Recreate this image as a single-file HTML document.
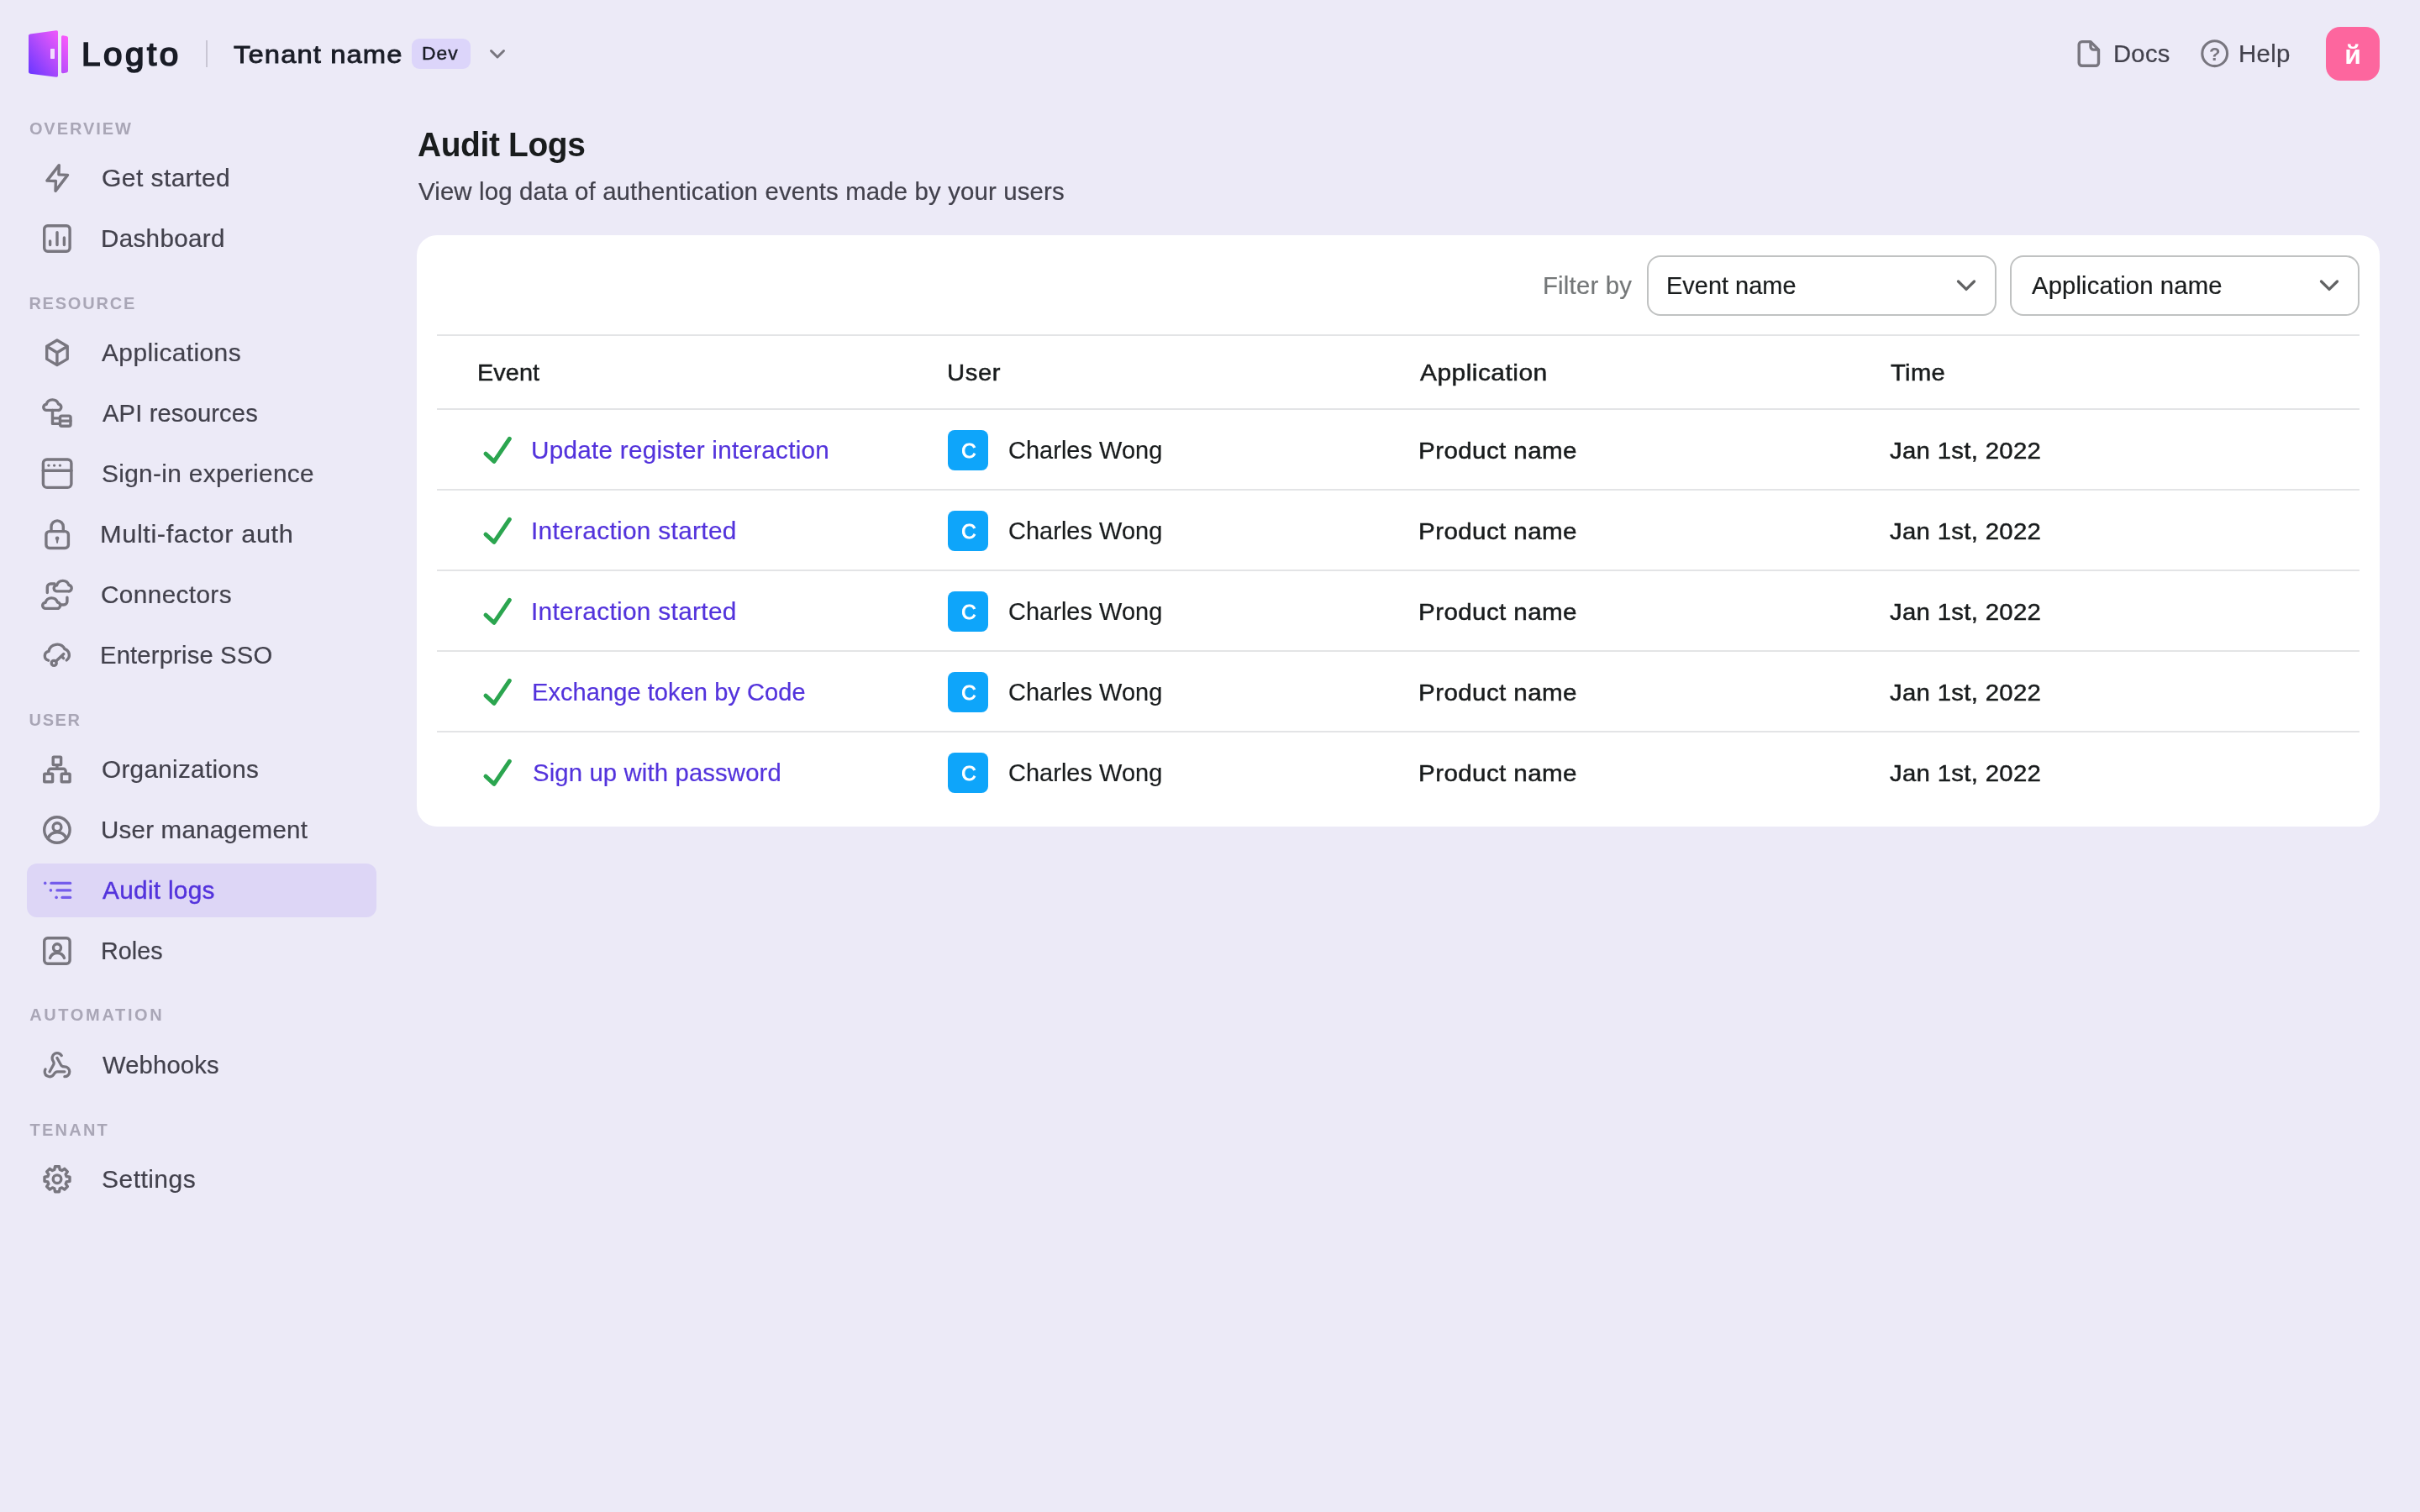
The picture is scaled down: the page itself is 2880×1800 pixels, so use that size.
<!DOCTYPE html>
<html lang="en"><head><meta charset="utf-8"><title>Audit Logs</title>
<style>
html,body{margin:0;padding:0}
html{background:#eceaf7;overflow:hidden}
body{width:2880px;height:1800px;background:#eceaf7;overflow:hidden;position:relative;}
#page{width:2880px;height:1800px;background:#eceaf7;position:absolute;left:0;top:0;overflow:hidden;transform-origin:0 0;font-family:"Liberation Sans",sans-serif;}
.t{position:absolute;white-space:nowrap;transform-origin:0 0;}
#txt{position:absolute;left:0;top:0;width:2880px;height:1800px;will-change:transform}
.abs{position:absolute}
#card{left:496px;top:280px;width:2336px;height:704px;background:#fff;border-radius:24px}
.hl{position:absolute;left:520px;width:2288px;height:2px;background:#e3e4e6}
.sel{position:absolute;top:304px;width:412px;height:68px;border:2px solid #c0c2c2;border-radius:16px;background:#fff}
.ua{position:absolute;left:1128px;width:48px;height:48px;border-radius:8px;background:#0ea5fa}
svg{position:absolute;left:0;top:0;will-change:transform}
</style></head><body><div id="page">
<div class="abs" style="left:32px;top:1028px;width:416px;height:64px;border-radius:12px;background:#ddd6f6"></div>
<div class="abs" style="left:245px;top:48px;width:2px;height:32px;background:#c9c6d4"></div>
<div class="abs" style="left:490px;top:46px;width:70px;height:36px;border-radius:9px;background:#dcd5fa"></div>
<div class="abs" style="left:2768px;top:32px;width:64px;height:64px;border-radius:17px;background:#fd669e"></div>
<div class="abs" id="card"></div>
<div class="sel" style="left:1960px"></div>
<div class="sel" style="left:2392px"></div>
<div class="hl" style="top:398px"></div><div class="hl" style="top:486px"></div><div class="hl" style="top:582px"></div><div class="hl" style="top:678px"></div><div class="hl" style="top:774px"></div><div class="hl" style="top:870px"></div>
<div class="ua" style="top:512px"></div><div class="ua" style="top:608px"></div><div class="ua" style="top:704px"></div><div class="ua" style="top:800px"></div><div class="ua" style="top:896px"></div>
<svg width="2880" height="1800" viewBox="0 0 2880 1800">

<defs>
<linearGradient id="lg" gradientUnits="userSpaceOnUse" x1="34" y1="84" x2="84" y2="46">
<stop offset="0" stop-color="#6f38ff"/><stop offset="0.5" stop-color="#b84dfb"/><stop offset="1" stop-color="#ff5cfb"/>
</linearGradient>
</defs>
<path d="M36 40.4 L67 36.2 Q69 36 69 38 V90 Q69 92 67 91.8 L36 87.8 Q34 87.5 34 85.5 V42.5 Q34 40.7 36 40.4 Z" fill="url(#lg)"/>
<path d="M73 44 Q73 42 75 42.3 L79.2 43 Q81 43.3 81 45 V84.5 Q81 86.2 79.2 86.5 L75 87.3 Q73 87.6 73 85.6 Z" fill="url(#lg)"/>
<rect x="60" y="58" width="5" height="12" rx="0.8" fill="#f3dcff"/>

<path d="M70.3 196.6 L55.9 215.1 L66.4 215.5 L66 227.4 L80.5 208.4 L69.9 207.9 Z" fill="none" stroke="#78767f" stroke-width="3.4" stroke-linecap="round" stroke-linejoin="round" />
<rect x="52.7" y="268.8" width="30.40" height="30.40" rx="4" fill="none" stroke="#78767f" stroke-width="3.4"/>
<path d="M59.6 287 V291.5 M68 276.6 V291.5 M76.4 283 V291.5" fill="none" stroke="#78767f" stroke-width="3.4" stroke-linecap="round" stroke-linejoin="round" />
<path d="M67.9 405 L80.2 412.2 V427.4 L67.9 434.6 L55.7 427.4 V412.2 Z M55.7 412.2 L67.9 419.8 L80.2 412.2 M67.9 419.8 V434.6" fill="none" stroke="#78767f" stroke-width="3.4" stroke-linecap="round" stroke-linejoin="round" />
<path d="M55.50 488.40 a3.6 3.6 0 0 1 -0.3 -7.2 a7.5 7.5 0 0 1 14.3 -0.2 a3.7 3.7 0 0 1 -0.8 7.4 Z" fill="none" stroke="#78767f" stroke-width="3.4" stroke-linecap="round" stroke-linejoin="round" />
<path d="M62.5 488.4 V504.4 H70.3 M62.5 497.9 H70.3" fill="none" stroke="#78767f" stroke-width="3.4" stroke-linecap="round" stroke-linejoin="round" />
<rect x="71.5" y="495.1" width="12.50" height="12.10" rx="2" fill="none" stroke="#78767f" stroke-width="3.4"/>
<path d="M71.5 501.1 H84" fill="none" stroke="#78767f" stroke-width="3.4" stroke-linecap="round" stroke-linejoin="round" />
<rect x="51.4" y="547" width="33.50" height="33.40" rx="4.5" fill="none" stroke="#78767f" stroke-width="3.4"/>
<path d="M51.4 560.2 H84.9" fill="none" stroke="#78767f" stroke-width="3.4" stroke-linecap="round" stroke-linejoin="round" />
<circle cx="57.9" cy="554.1" r="1.7" fill="#78767f"/>
<circle cx="64.6" cy="554.1" r="1.7" fill="#78767f"/>
<circle cx="71.4" cy="554.1" r="1.7" fill="#78767f"/>
<rect x="54.9" y="632.6" width="26.50" height="19.90" rx="4" fill="none" stroke="#78767f" stroke-width="3.4"/>
<path d="M61 632.6 V627 a7.15 7.15 0 0 1 14.3 0 V632.6" fill="none" stroke="#78767f" stroke-width="3.4" stroke-linecap="round" stroke-linejoin="round" />
<path d="M68.1 638.4 a2.3 2.3 0 0 1 2.3 2.3 c0 1 -0.6 1.5 -0.9 2.2 l-0.5 3.2 a0.9 0.9 0 0 1 -1.8 0 l-0.5 -3.2 c-0.3 -0.7 -0.9 -1.2 -0.9 -2.2 a2.3 2.3 0 0 1 2.3 -2.3 Z" fill="#78767f" stroke="#78767f" stroke-width="0" stroke-linecap="round" stroke-linejoin="round" />
<path d="M67.90 703.90 a3.6 3.6 0 0 1 -0.3 -7.2 a7.5 7.5 0 0 1 14.3 -0.2 a3.7 3.7 0 0 1 -0.8 7.4 Z" fill="none" stroke="#78767f" stroke-width="3.4" stroke-linecap="round" stroke-linejoin="round" />
<path d="M54.40 724.40 a3.6 3.6 0 0 1 -0.3 -7.2 a7.5 7.5 0 0 1 14.3 -0.2 a3.7 3.7 0 0 1 -0.8 7.4 Z" fill="none" stroke="#78767f" stroke-width="3.4" stroke-linecap="round" stroke-linejoin="round" />
<path d="M56.3 705.6 V699 a4 4 0 0 1 4 -4 H65" fill="none" stroke="#78767f" stroke-width="3.4" stroke-linecap="round" stroke-linejoin="round" />
<path d="M79.9 711.2 V716 a4 4 0 0 1 -4 4 H72.5" fill="none" stroke="#78767f" stroke-width="3.4" stroke-linecap="round" stroke-linejoin="round" />
<path d="M57.6 786.2 A5.5 5.5 0 0 1 58 775.4 A10.2 10.2 0 0 1 77 772.6 A7.6 7.6 0 0 1 79.2 786" fill="none" stroke="#78767f" stroke-width="3.4" stroke-linecap="round" stroke-linejoin="round" />
<circle cx="64.2" cy="789.4" r="3.0" fill="none" stroke="#78767f" stroke-width="3.4"/>
<path d="M66.5 787.2 L75.8 778.6 M73.2 781 L75.6 783.6" fill="none" stroke="#78767f" stroke-width="3.4" stroke-linecap="round" stroke-linejoin="round" />
<rect x="63.2" y="901.1" width="9.40" height="9.50" rx="0.8" fill="none" stroke="#78767f" stroke-width="3.4"/>
<rect x="52.7" y="921.2" width="9.90" height="9.50" rx="0.8" fill="none" stroke="#78767f" stroke-width="3.4"/>
<rect x="73.2" y="921.2" width="9.90" height="9.50" rx="0.8" fill="none" stroke="#78767f" stroke-width="3.4"/>
<path d="M67.9 910.6 V915.3 M57.65 921.2 V918 a2.7 2.7 0 0 1 2.7 -2.7 H75.45 a2.7 2.7 0 0 1 2.7 2.7 V921.2" fill="none" stroke="#78767f" stroke-width="3.4" stroke-linecap="round" stroke-linejoin="round" />
<circle cx="67.9" cy="988" r="15.2" fill="none" stroke="#78767f" stroke-width="3.4"/>
<circle cx="68" cy="984.7" r="4.9" fill="none" stroke="#78767f" stroke-width="3.4"/>
<path d="M57 998.3 a11.8 11.8 0 0 1 22 0" fill="none" stroke="#78767f" stroke-width="3.4" stroke-linecap="round" stroke-linejoin="round" />
<circle cx="53.7" cy="1051.4" r="1.8" fill="#745ceb"/>
<path d="M60.9 1051.4 H83.7" fill="none" stroke="#745ceb" stroke-width="3.2" stroke-linecap="round" stroke-linejoin="round" />
<circle cx="60.4" cy="1059.9" r="1.8" fill="#745ceb"/>
<path d="M67.9 1059.9 H83.7" fill="none" stroke="#745ceb" stroke-width="3.2" stroke-linecap="round" stroke-linejoin="round" />
<circle cx="67.1" cy="1068.4" r="1.8" fill="#745ceb"/>
<path d="M74 1068.4 H83.7" fill="none" stroke="#745ceb" stroke-width="3.2" stroke-linecap="round" stroke-linejoin="round" />
<rect x="52.7" y="1116.8" width="30.40" height="30.40" rx="4" fill="none" stroke="#78767f" stroke-width="3.4"/>
<circle cx="68" cy="1128.3" r="4.5" fill="none" stroke="#78767f" stroke-width="3.4"/>
<path d="M59.5 1140.5 a9 9 0 0 1 17 0" fill="none" stroke="#78767f" stroke-width="3.4" stroke-linecap="round" stroke-linejoin="round" />
<g transform="translate(50.24 1250.64) scale(1.48)" fill="none" stroke="#78767f" stroke-width="2.2" stroke-linecap="round" stroke-linejoin="round"><path d="M18 16.98h-5.99c-1.1 0-1.95.94-2.48 1.9A4 4 0 0 1 2 17c.01-.7.2-1.4.57-2"/><path d="m6 17 3.13-5.78c.53-.97.1-2.18-.5-3.1a4 4 0 1 1 6.89-4.06"/><path d="m12 6 3.13 5.73C15.66 12.7 16.9 13 18 13a4 4 0 0 1 0 8"/></g>
<path d="M82.99 1401.19 L82.99 1406.21 L79.15 1406.90 L78.15 1409.32 L80.37 1412.53 L76.83 1416.07 L73.62 1413.85 L71.20 1414.85 L70.51 1418.69 L65.49 1418.69 L64.80 1414.85 L62.38 1413.85 L59.17 1416.07 L55.63 1412.53 L57.85 1409.32 L56.85 1406.90 L53.01 1406.21 L53.01 1401.19 L56.85 1400.50 L57.85 1398.08 L55.63 1394.87 L59.17 1391.33 L62.38 1393.55 L64.80 1392.55 L65.49 1388.71 L70.51 1388.71 L71.20 1392.55 L73.62 1393.55 L76.83 1391.33 L80.37 1394.87 L78.15 1398.08 L79.15 1400.50 Z" fill="none" stroke="#78767f" stroke-width="3.4" stroke-linecap="round" stroke-linejoin="round" />
<circle cx="68" cy="1403.7" r="4.8" fill="none" stroke="#78767f" stroke-width="3.4"/>
<path d="M2477.7 49.6 h10.3 l9.5 9.5 v15.7 a3.5 3.5 0 0 1 -3.5 3.5 h-16.3 a3.5 3.5 0 0 1 -3.5 -3.5 v-21.7 a3.5 3.5 0 0 1 3.5 -3.5 Z M2488 49.6 v6 a3.5 3.5 0 0 0 3.5 3.5 h6" fill="none" stroke="#78767f" stroke-width="3.4" stroke-linecap="round" stroke-linejoin="round" />
<circle cx="2635.7" cy="63.7" r="14.9" fill="none" stroke="#78767f" stroke-width="3.1"/>
<text x="2635.7" y="71.6" text-anchor="middle" font-family="Liberation Sans, sans-serif" font-weight="700" font-size="22" fill="#78767f">?</text>
<path d="M584.5 60.5 L592 68 L599.5 60.5" fill="none" stroke="#78767f" stroke-width="3" stroke-linecap="round" stroke-linejoin="round" />
<path d="M2330.5 335 L2340 344.4 L2349.5 335" fill="none" stroke="#626364" stroke-width="3.3" stroke-linecap="round" stroke-linejoin="round" />
<path d="M2762.5 335 L2772 344.4 L2781.5 335" fill="none" stroke="#626364" stroke-width="3.3" stroke-linecap="round" stroke-linejoin="round" />
<path d="M578 540.2 L588 549.3 L606.3 522.3" fill="none" stroke="#2ba54f" stroke-width="5" stroke-linecap="round" stroke-linejoin="round" />
<path d="M578 636.2 L588 645.3 L606.3 618.3" fill="none" stroke="#2ba54f" stroke-width="5" stroke-linecap="round" stroke-linejoin="round" />
<path d="M578 732.2 L588 741.3 L606.3 714.3" fill="none" stroke="#2ba54f" stroke-width="5" stroke-linecap="round" stroke-linejoin="round" />
<path d="M578 828.2 L588 837.3 L606.3 810.3" fill="none" stroke="#2ba54f" stroke-width="5" stroke-linecap="round" stroke-linejoin="round" />
<path d="M578 924.2 L588 933.3 L606.3 906.3" fill="none" stroke="#2ba54f" stroke-width="5" stroke-linecap="round" stroke-linejoin="round" />
</svg>
<div id="txt">
<div class="t" style="left:96.58px;top:40.50px;font-size:38.5px;line-height:48px;color:#191c26;letter-spacing:3.354px;transform:scaleX(1.0500);-webkit-text-stroke:1.7px #191c26;">Logto</div>
<div class="t" style="left:277.72px;top:45.80px;font-size:30px;line-height:38px;color:#191c26;letter-spacing:1.023px;transform:scaleX(1.0914);-webkit-text-stroke:0.85px #191c26;">Tenant name</div>
<div class="t" style="left:502.24px;top:51.10px;font-size:21.5px;line-height:27px;color:#191c26;letter-spacing:0.984px;transform:scaleX(1.0611);-webkit-text-stroke:0.45px #191c26;">Dev</div>
<div class="t" style="left:2514.61px;top:45.80px;font-size:29px;line-height:36px;color:#42414c;letter-spacing:0.294px;transform:scaleX(1.0059);-webkit-text-stroke:0.2px #42414c;">Docs</div>
<div class="t" style="left:2664.23px;top:45.80px;font-size:29px;line-height:36px;color:#42414c;letter-spacing:0.227px;transform:scaleX(1.0168);-webkit-text-stroke:0.2px #42414c;">Help</div>
<div class="t" style="left:2790.23px;top:45.00px;font-size:32px;line-height:40px;color:#ffffff;letter-spacing:0.000px;font-weight:700;">й</div>
<div class="t" style="left:34.88px;top:140.50px;font-size:20px;line-height:25px;color:#a9a6b6;letter-spacing:1.929px;font-weight:700;">OVERVIEW</div>
<div class="t" style="left:34.40px;top:348.50px;font-size:20px;line-height:25px;color:#a9a6b6;letter-spacing:1.786px;font-weight:700;">RESOURCE</div>
<div class="t" style="left:34.56px;top:844.50px;font-size:20px;line-height:25px;color:#a9a6b6;letter-spacing:1.642px;font-weight:700;">USER</div>
<div class="t" style="left:35.17px;top:1196.00px;font-size:20px;line-height:25px;color:#a9a6b6;letter-spacing:2.656px;font-weight:700;">AUTOMATION</div>
<div class="t" style="left:35.51px;top:1332.50px;font-size:20px;line-height:25px;color:#a9a6b6;letter-spacing:2.240px;font-weight:700;">TENANT</div>
<div class="t" style="left:120.52px;top:194.20px;font-size:29px;line-height:36px;color:#42414c;letter-spacing:0.418px;transform:scaleX(1.0351);-webkit-text-stroke:0.2px #42414c;">Get started</div>
<div class="t" style="left:119.99px;top:266.20px;font-size:29px;line-height:36px;color:#42414c;letter-spacing:0.330px;transform:scaleX(1.0197);-webkit-text-stroke:0.2px #42414c;">Dashboard</div>
<div class="t" style="left:121.43px;top:402.20px;font-size:29px;line-height:36px;color:#42414c;letter-spacing:0.351px;transform:scaleX(1.0336);-webkit-text-stroke:0.2px #42414c;">Applications</div>
<div class="t" style="left:122.11px;top:474.20px;font-size:29px;line-height:36px;color:#42414c;letter-spacing:0.117px;transform:scaleX(1.0065);-webkit-text-stroke:0.2px #42414c;">API resources</div>
<div class="t" style="left:120.91px;top:546.20px;font-size:29px;line-height:36px;color:#42414c;letter-spacing:0.296px;transform:scaleX(1.0303);-webkit-text-stroke:0.2px #42414c;">Sign-in experience</div>
<div class="t" style="left:119.46px;top:618.20px;font-size:29px;line-height:36px;color:#42414c;letter-spacing:0.544px;transform:scaleX(1.0610);-webkit-text-stroke:0.2px #42414c;">Multi-factor auth</div>
<div class="t" style="left:120.33px;top:690.20px;font-size:29px;line-height:36px;color:#42414c;letter-spacing:0.356px;transform:scaleX(1.0266);-webkit-text-stroke:0.2px #42414c;">Connectors</div>
<div class="t" style="left:119.45px;top:762.20px;font-size:29px;line-height:36px;color:#42414c;letter-spacing:0.157px;transform:scaleX(1.0081);-webkit-text-stroke:0.2px #42414c;">Enterprise SSO</div>
<div class="t" style="left:120.80px;top:898.20px;font-size:29px;line-height:36px;color:#42414c;letter-spacing:0.292px;transform:scaleX(1.0243);-webkit-text-stroke:0.2px #42414c;">Organizations</div>
<div class="t" style="left:119.99px;top:970.20px;font-size:29px;line-height:36px;color:#42414c;letter-spacing:0.210px;transform:scaleX(1.0180);-webkit-text-stroke:0.2px #42414c;">User management</div>
<div class="t" style="left:121.89px;top:1042.20px;font-size:29px;line-height:36px;color:#5333dc;letter-spacing:0.287px;transform:scaleX(1.0272);-webkit-text-stroke:0.4px #5333dc;">Audit logs</div>
<div class="t" style="left:119.68px;top:1114.20px;font-size:29px;line-height:36px;color:#42414c;letter-spacing:0.048px;transform:scaleX(0.9913);-webkit-text-stroke:0.2px #42414c;">Roles</div>
<div class="t" style="left:122.06px;top:1250.20px;font-size:29px;line-height:36px;color:#42414c;letter-spacing:0.166px;transform:scaleX(1.0071);-webkit-text-stroke:0.2px #42414c;">Webhooks</div>
<div class="t" style="left:120.89px;top:1386.20px;font-size:29px;line-height:36px;color:#42414c;letter-spacing:0.448px;transform:scaleX(1.0349);-webkit-text-stroke:0.2px #42414c;">Settings</div>
<div class="t" style="left:497.33px;top:147.00px;font-size:40px;line-height:50px;color:#191c1d;letter-spacing:-0.374px;transform:scaleX(0.9724);font-weight:700;">Audit Logs</div>
<div class="t" style="left:497.88px;top:210.00px;font-size:29px;line-height:36px;color:#42414c;letter-spacing:0.132px;transform:scaleX(1.0139);-webkit-text-stroke:0.2px #42414c;">View log data of authentication events made by your users</div>
<div class="t" style="left:1835.63px;top:322.20px;font-size:29px;line-height:36px;color:#747778;letter-spacing:0.193px;transform:scaleX(1.0116);-webkit-text-stroke:0.2px #747778;">Filter by</div>
<div class="t" style="left:1983.43px;top:322.20px;font-size:29px;line-height:36px;color:#191c1d;letter-spacing:0.012px;transform:scaleX(0.9979);-webkit-text-stroke:0.2px #191c1d;">Event name</div>
<div class="t" style="left:2417.98px;top:322.20px;font-size:29px;line-height:36px;color:#191c1d;letter-spacing:0.113px;transform:scaleX(1.0102);-webkit-text-stroke:0.2px #191c1d;">Application name</div>
<div class="t" style="left:567.63px;top:425.40px;font-size:28.5px;line-height:36px;color:#191c1d;letter-spacing:0.122px;transform:scaleX(1.0096);-webkit-text-stroke:0.5px #191c1d;">Event</div>
<div class="t" style="left:1127.42px;top:425.40px;font-size:28.5px;line-height:36px;color:#191c1d;letter-spacing:0.623px;transform:scaleX(1.0247);-webkit-text-stroke:0.5px #191c1d;">User</div>
<div class="t" style="left:1689.91px;top:425.40px;font-size:28.5px;line-height:36px;color:#191c1d;letter-spacing:0.425px;transform:scaleX(1.0524);-webkit-text-stroke:0.5px #191c1d;">Application</div>
<div class="t" style="left:2249.56px;top:425.40px;font-size:28.5px;line-height:36px;color:#191c1d;letter-spacing:0.384px;transform:scaleX(1.0213);-webkit-text-stroke:0.5px #191c1d;">Time</div>
<div class="t" style="left:632.39px;top:518.00px;font-size:29px;line-height:36px;color:#5333dc;letter-spacing:0.235px;transform:scaleX(1.0248);-webkit-text-stroke:0.2px #5333dc;">Update register interaction</div>
<div class="t" style="left:1144.25px;top:521.70px;font-size:24px;line-height:30px;color:#ffffff;letter-spacing:0.000px;-webkit-text-stroke:1.0px #ffffff;">C</div>
<div class="t" style="left:1200.43px;top:518.00px;font-size:29px;line-height:36px;color:#191c1d;letter-spacing:0.053px;transform:scaleX(0.9971);-webkit-text-stroke:0.2px #191c1d;">Charles Wong</div>
<div class="t" style="left:1688.09px;top:518.00px;font-size:28.5px;line-height:36px;color:#191c1d;letter-spacing:0.383px;transform:scaleX(1.0379);-webkit-text-stroke:0.5px #191c1d;">Product name</div>
<div class="t" style="left:2249.04px;top:518.00px;font-size:28.5px;line-height:36px;color:#191c1d;letter-spacing:0.307px;transform:scaleX(1.0293);-webkit-text-stroke:0.5px #191c1d;">Jan 1st, 2022</div>
<div class="t" style="left:632.20px;top:614.00px;font-size:29px;line-height:36px;color:#5333dc;letter-spacing:0.298px;transform:scaleX(1.0291);-webkit-text-stroke:0.2px #5333dc;">Interaction started</div>
<div class="t" style="left:1144.25px;top:617.70px;font-size:24px;line-height:30px;color:#ffffff;letter-spacing:0.000px;-webkit-text-stroke:1.0px #ffffff;">C</div>
<div class="t" style="left:1200.43px;top:614.00px;font-size:29px;line-height:36px;color:#191c1d;letter-spacing:0.053px;transform:scaleX(0.9971);-webkit-text-stroke:0.2px #191c1d;">Charles Wong</div>
<div class="t" style="left:1688.09px;top:614.00px;font-size:28.5px;line-height:36px;color:#191c1d;letter-spacing:0.383px;transform:scaleX(1.0379);-webkit-text-stroke:0.5px #191c1d;">Product name</div>
<div class="t" style="left:2249.04px;top:614.00px;font-size:28.5px;line-height:36px;color:#191c1d;letter-spacing:0.307px;transform:scaleX(1.0293);-webkit-text-stroke:0.5px #191c1d;">Jan 1st, 2022</div>
<div class="t" style="left:632.20px;top:710.00px;font-size:29px;line-height:36px;color:#5333dc;letter-spacing:0.298px;transform:scaleX(1.0291);-webkit-text-stroke:0.2px #5333dc;">Interaction started</div>
<div class="t" style="left:1144.25px;top:713.70px;font-size:24px;line-height:30px;color:#ffffff;letter-spacing:0.000px;-webkit-text-stroke:1.0px #ffffff;">C</div>
<div class="t" style="left:1200.43px;top:710.00px;font-size:29px;line-height:36px;color:#191c1d;letter-spacing:0.053px;transform:scaleX(0.9971);-webkit-text-stroke:0.2px #191c1d;">Charles Wong</div>
<div class="t" style="left:1688.09px;top:710.00px;font-size:28.5px;line-height:36px;color:#191c1d;letter-spacing:0.383px;transform:scaleX(1.0379);-webkit-text-stroke:0.5px #191c1d;">Product name</div>
<div class="t" style="left:2249.04px;top:710.00px;font-size:28.5px;line-height:36px;color:#191c1d;letter-spacing:0.307px;transform:scaleX(1.0293);-webkit-text-stroke:0.5px #191c1d;">Jan 1st, 2022</div>
<div class="t" style="left:632.65px;top:806.00px;font-size:29px;line-height:36px;color:#5333dc;letter-spacing:0.043px;transform:scaleX(1.0022);-webkit-text-stroke:0.2px #5333dc;">Exchange token by Code</div>
<div class="t" style="left:1144.25px;top:809.70px;font-size:24px;line-height:30px;color:#ffffff;letter-spacing:0.000px;-webkit-text-stroke:1.0px #ffffff;">C</div>
<div class="t" style="left:1200.43px;top:806.00px;font-size:29px;line-height:36px;color:#191c1d;letter-spacing:0.053px;transform:scaleX(0.9971);-webkit-text-stroke:0.2px #191c1d;">Charles Wong</div>
<div class="t" style="left:1688.09px;top:806.00px;font-size:28.5px;line-height:36px;color:#191c1d;letter-spacing:0.383px;transform:scaleX(1.0379);-webkit-text-stroke:0.5px #191c1d;">Product name</div>
<div class="t" style="left:2249.04px;top:806.00px;font-size:28.5px;line-height:36px;color:#191c1d;letter-spacing:0.307px;transform:scaleX(1.0293);-webkit-text-stroke:0.5px #191c1d;">Jan 1st, 2022</div>
<div class="t" style="left:633.51px;top:902.00px;font-size:29px;line-height:36px;color:#5333dc;letter-spacing:0.140px;transform:scaleX(1.0095);-webkit-text-stroke:0.2px #5333dc;">Sign up with password</div>
<div class="t" style="left:1144.25px;top:905.70px;font-size:24px;line-height:30px;color:#ffffff;letter-spacing:0.000px;-webkit-text-stroke:1.0px #ffffff;">C</div>
<div class="t" style="left:1200.43px;top:902.00px;font-size:29px;line-height:36px;color:#191c1d;letter-spacing:0.053px;transform:scaleX(0.9971);-webkit-text-stroke:0.2px #191c1d;">Charles Wong</div>
<div class="t" style="left:1688.09px;top:902.00px;font-size:28.5px;line-height:36px;color:#191c1d;letter-spacing:0.383px;transform:scaleX(1.0379);-webkit-text-stroke:0.5px #191c1d;">Product name</div>
<div class="t" style="left:2249.04px;top:902.00px;font-size:28.5px;line-height:36px;color:#191c1d;letter-spacing:0.307px;transform:scaleX(1.0293);-webkit-text-stroke:0.5px #191c1d;">Jan 1st, 2022</div>
</div>
</div>
<script>(function(){var w=window.innerWidth||2880,s=w/2880;if(Math.abs(s-1)>0.01){var p=document.getElementById('page'),b=document.body;p.style.transform='scale('+s+')';b.style.width=w+'px';b.style.height=Math.ceil(1800*s)+'px';}})();</script>
</body></html>
